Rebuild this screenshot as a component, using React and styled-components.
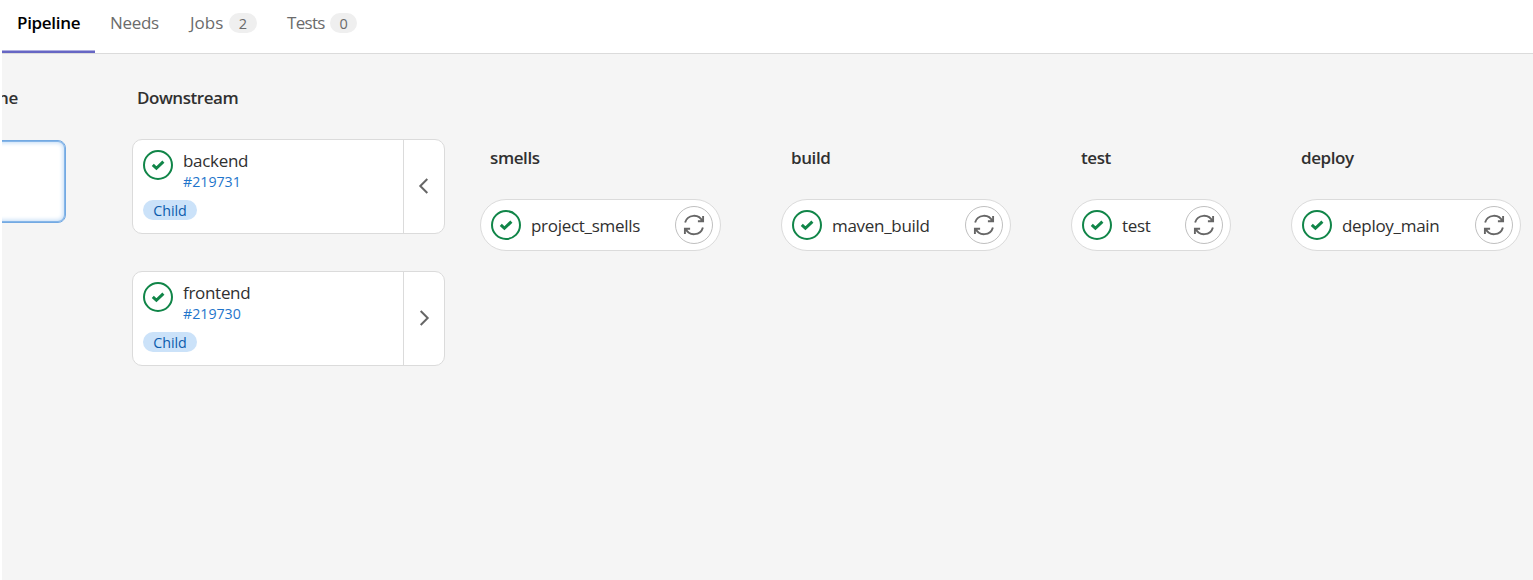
import React from "react";
import styled, { createGlobalStyle } from "styled-components";

const Global = createGlobalStyle`
  * { box-sizing: border-box; }
  body {
    margin: 0;
    background: #fff;
    color: #303030;
    font-family: "Open Sans", "Noto Sans", sans-serif;
    font-weight: 400;
    overflow: hidden;
  }
`;

const Page = styled.div`
  height: 580px;
  padding-left: 2px;
  display: flex;
  flex-direction: column;
  overflow: hidden;
`;

const Tabs = styled.nav`
  display: flex;
  height: 54px;
  flex: none;
  border-bottom: 1px solid #dbdbdb;
`;

const Tab = styled.div`
  width: ${(p) => p.$width}px;
  height: 53px;
  padding: 0 0 8px 15px;
  display: flex;
  align-items: center;
  font-size: 17px;
  white-space: nowrap;
  font-weight: ${(p) => (p.$active ? 600 : 400)};
  color: ${(p) => (p.$active ? "#000" : "#6b6b6b")};
  box-shadow: ${(p) => (p.$active ? "inset 0 -2px 0 #6666c4, inset 0 -3px 0 #b0b0e0" : "none")};
`;

const Text = styled.span`
  letter-spacing: ${(p) => p.$track || 0}px;
  line-height: 23px;
`;

const Count = styled.span`
  height: 20px;
  width: ${(p) => p.$width}px;
  margin: 1px 0 0 ${(p) => p.$offset}px;
  border-radius: 10px;
  background: #efefef;
  font-size: 14.5px;
  line-height: 21px;
  text-align: center;
`;

const Graph = styled.main`
  flex: 1;
  display: flex;
  align-items: flex-start;
  background: #f5f5f5;
  overflow: hidden;
`;

const Upstream = styled.section`
  width: 64px;
  flex: none;
  padding-top: 30px;
  margin-right: 66px;
`;

const Title = styled.h2`
  margin: 0;
  height: 28px;
  padding-left: ${(p) => p.$inset}px;
  font-size: 17px;
  font-weight: 600;
  line-height: 28px;
  letter-spacing: ${(p) => p.$track || 0}px;
  white-space: nowrap;
`;

const ClippedTitle = styled(Title)`
  margin-left: -4px;
`;

const SelectedCard = styled.div`
  margin: 28px 0 0 -10px;
  height: 83px;
  border: 1px solid #73a9e2;
  border-radius: 8px;
  background: #fff;
  box-shadow: inset 0 0 0 1px #86b6e8, inset 0 0 4px 2px #c3dcf6;
`;

const Downstream = styled.section`
  width: 313px;
  flex: none;
  padding-top: 30px;
  margin-right: 35px;
`;

const CardList = styled.div`
  margin-top: 27px;
  display: flex;
  flex-direction: column;
  gap: 37px;
`;

const Card = styled.article`
  height: 95px;
  display: flex;
  border: 1px solid #dbdbdb;
  border-radius: 10px;
  background: #fff;
`;

const CardBody = styled.div`
  flex: 1;
  padding: 10px 0 0 10px;
`;

const CardHead = styled.div`
  display: flex;
  gap: 10px;
  height: 50px;
`;

const CardText = styled.div`
  display: flex;
  flex-direction: column;
`;

const Name = styled.span`
  height: 22px;
  font-size: 17px;
  line-height: 22px;
  letter-spacing: ${(p) => p.$track || 0}px;
  white-space: nowrap;
`;

const PipelineLink = styled.a`
  font-size: 14.2px;
  line-height: 20px;
  color: #1f75cb;
  letter-spacing: 0;
`;

const Badge = styled.span`
  display: block;
  width: 54px;
  height: 20px;
  border-radius: 10px;
  background: #cbe2f9;
  color: #0b5cad;
  font-size: 14.3px;
  line-height: 21px;
  text-align: center;
`;

const Toggle = styled.button`
  width: 41px;
  padding: 0 0 2px;
  border: 0;
  border-left: 1px solid #dbdbdb;
  background: transparent;
  display: flex;
  align-items: center;
  justify-content: center;
`;

const Stage = styled.section`
  width: ${(p) => p.$width}px;
  flex: none;
  padding-top: 90px;
  margin-right: ${(p) => p.$gap}px;
`;

const Job = styled.div`
  margin-top: 27px;
  height: 52px;
  padding: 0 7px 0 10px;
  display: flex;
  align-items: center;
  border: 1px solid #dbdbdb;
  border-radius: 26px;
  background: #fff;
`;

const JobName = styled(Name)`
  flex: 1;
  padding-left: 10px;
  line-height: 23px;
`;

const Retry = styled.button`
  width: 38px;
  height: 38px;
  padding: 0;
  flex: none;
  display: flex;
  align-items: center;
  justify-content: center;
  border: 1px solid #bfbfbf;
  border-radius: 50%;
  background: #fff;
`;

const Icon = styled.svg`
  display: block;
  flex: none;
  fill: none;
`;

const Success = () => (
  <Icon width="30" height="30" viewBox="0 0 30 30" stroke="#108548">
    <circle cx="15" cy="15" r="14" strokeWidth="2" />
    <path d="M9.8 14.9 13.4 18.3 20.4 11.6" strokeWidth="3" />
  </Icon>
);

const RetryIcon = () => (
  <Icon width="22" height="22" viewBox="0 0 22 22" stroke="#666" strokeWidth="1.9">
    <path d="M2.1 8.6A9.2 9.2 0 0 1 19.4 7.3M20.1 2V7.3H14.9" />
    <path d="M19.9 13.4A9.2 9.2 0 0 1 2.6 14.7M1.9 20V14.7H7.1" />
  </Icon>
);

const Chevron = ({ open }) => (
  <Icon width="12" height="18" viewBox="0 0 12 18" stroke="#666" strokeWidth="2">
    <path d={open ? "M9.3 2 2.3 9 9.3 16" : "M2.7 2 9.7 9 2.7 16"} />
  </Icon>
);

const tabs = [
  { label: "Pipeline", width: 93, active: true, track: -0.3 },
  { label: "Needs", width: 80, track: -0.3 },
  { label: "Jobs", width: 97, count: 2, countWidth: 28, offset: 5.5, track: 0 },
  { label: "Tests", width: 100, count: 0, countWidth: 27, offset: 5.5, track: -0.7 },
];

const pipelines = [
  { name: "backend", id: "#219731", open: true },
  { name: "frontend", id: "#219730", open: false },
];

const stages = [
  { title: "smells", job: "project_smells", width: 241, gap: 60 },
  { title: "build", job: "maven_build", width: 230, gap: 60 },
  { title: "test", job: "test", width: 160, gap: 60 },
  { title: "deploy", job: "deploy_main", width: 230, gap: 0 },
];

export default function App() {
  return (
    <>
      <Global />
      <Page>
        <Tabs>
          {tabs.map((t) => (
            <Tab key={t.label} $width={t.width} $active={t.active}>
              <Text $track={t.track}>{t.label}</Text>
              {t.count !== undefined && (
                <Count $width={t.countWidth} $offset={t.offset}>{t.count}</Count>
              )}
            </Tab>
          ))}
        </Tabs>
        <Graph>
          <Upstream>
            <ClippedTitle $inset={0} $track={-0.3}>ne</ClippedTitle>
            <SelectedCard />
          </Upstream>
          <Downstream>
            <Title $inset={5} $track={-0.45}>Downstream</Title>
            <CardList>
              {pipelines.map((p) => (
                <Card key={p.id}>
                  <CardBody>
                    <CardHead>
                      <Success />
                      <CardText>
                        <Name $track={-0.3}>{p.name}</Name>
                        <PipelineLink>{p.id}</PipelineLink>
                      </CardText>
                    </CardHead>
                    <Badge>Child</Badge>
                  </CardBody>
                  <Toggle>
                    <Chevron open={p.open} />
                  </Toggle>
                </Card>
              ))}
            </CardList>
          </Downstream>
          {stages.map((s) => (
            <Stage key={s.title} $width={s.width} $gap={s.gap}>
              <Title $inset={10} $track={-0.4}>{s.title}</Title>
              <Job>
                <Success />
                <JobName $track={-0.3}>{s.job}</JobName>
                <Retry>
                  <RetryIcon />
                </Retry>
              </Job>
            </Stage>
          ))}
        </Graph>
      </Page>
    </>
  );
}
